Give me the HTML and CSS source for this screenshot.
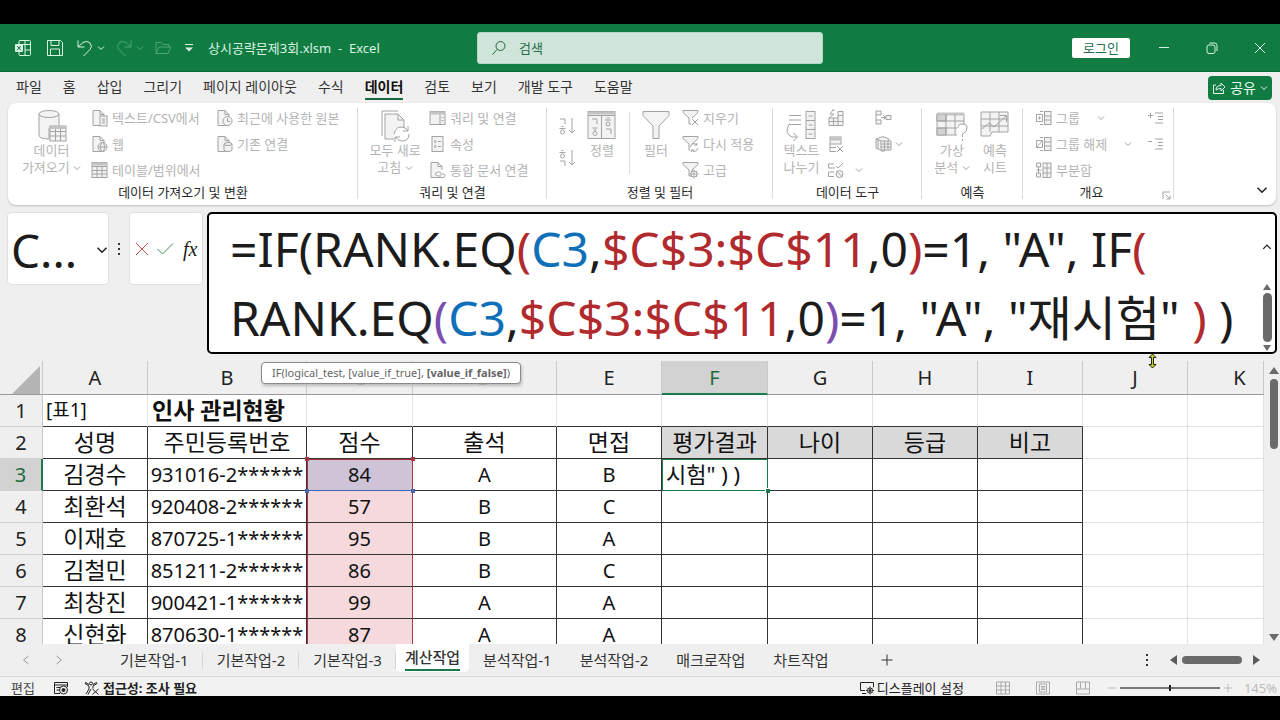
FILE: index.html
```html
<!DOCTYPE html>
<html lang="ko">
<head>
<meta charset="utf-8">
<title>상시공략문제3회.xlsm - Excel</title>
<link rel="stylesheet" href="styles.css">
</head>
<body>
<svg class="defs" aria-hidden="true">
  <symbol id="chev" viewBox="0 0 8 8"><path d="M1 2.500l3 3 3-3"/></symbol>
  <symbol id="doc" viewBox="0 0 18 18"><path class="f" d="M2 1.500h7l4 4v11H2z"/><path d="M9 1.500v4h4"/></symbol>
</svg>
<div class="app">
<header class="titlebar">
  <div class="quick">
    <button class="logo" aria-label="Excel"><svg width="18" height="18" viewBox="0 0 18 18"><path d="M5 5V2.500Q5 1.500 6 1.500h9.500q1 0 1 1v13q0 1-1 1H6q-1 0-1-1V13M5 5.500h11.500M11 1.500v15M11 11h5.500"/><rect class="solid" x="1" y="5" width="8" height="8" rx="1"/><path class="green" d="M3.200 7l3.600 4.200M6.800 7l-3.600 4.200"/></svg></button>
    <button aria-label="저장"><svg width="18" height="18" viewBox="0 0 18 18"><path d="M1.500 1.500h13l2 2v13h-15zM5 1.500v5h8v-5M4.500 16.500V10h9v6.500"/></svg></button>
    <button class="split" aria-label="실행 취소"><svg width="18" height="18" viewBox="0 0 18 18"><path d="M2 1.500v6.500h6.500M2 8l5-4.500q4-2.500 7 .5 3 3.500 0 6.500L7.500 17"/></svg><svg width="8" height="8"><use href="#chev"/></svg></button>
    <button class="split dim" aria-label="다시 실행"><svg width="18" height="18" viewBox="0 0 18 18"><path d="M16 1.500v6.500H9.500M16 8l-5-4.500q-4-2.500-7 .5-3 3.500 0 6.500L10.500 17"/></svg><svg width="8" height="8"><use href="#chev"/></svg></button>
    <button class="dim" aria-label="열기"><svg width="18" height="18" viewBox="0 0 18 18"><path d="M2 14.500v-11h5l2 2h5.500v2.500M2 14.500L5 8h12l-3 6.500z"/></svg></button>
    <button class="custom" aria-label="빠른 실행 도구 모음 사용자 지정"><svg width="10" height="10" viewBox="0 0 10 10"><path d="M1 1.500h8"/><path class="solid" d="M1 4.500h8L5 8.500z"/></svg></button>
    <span class="title">상시공략문제3회.xlsm&nbsp; -&nbsp; Excel</span>
  </div>
  <label class="search"><svg width="16" height="16" viewBox="0 0 16 16"><circle cx="9.500" cy="6" r="4.500"/><path d="M6.300 9.300L1.500 14.500"/></svg><input type="text" placeholder="검색" aria-label="검색"></label>
  <div class="window">
    <button class="login">로그인</button>
    <button aria-label="최소화"><svg width="12" height="12" viewBox="0 0 12 12"><path d="M1 5.500h10"/></svg></button>
    <button aria-label="이전 크기로"><svg width="12" height="12" viewBox="0 0 12 12"><rect x="1" y="3" width="8" height="8.500" rx="2"/><path d="M3.500 1h5q2.500 0 2.500 2.500V9"/></svg></button>
    <button aria-label="닫기"><svg width="12" height="12" viewBox="0 0 12 12"><path d="M1 1l10 10M11 1L1 11"/></svg></button>
  </div>
</header>

<nav class="menu">
  <a href="#">파일</a><a href="#">홈</a><a href="#">삽입</a><a href="#">그리기</a><a href="#">페이지 레이아웃</a><a href="#">수식</a><a href="#" class="on">데이터</a><a href="#">검토</a><a href="#">보기</a><a href="#">개발 도구</a><a href="#">도움말</a>
  <button class="share"><svg width="14" height="14" viewBox="0 0 14 14"><path d="M4 4H1.500v8.500h10V9M4 9q0-4.500 5-4.500V2l4 4-4 4V7.500Q6 7.500 4 9z"/></svg>공유<svg width="8" height="8"><use href="#chev"/></svg></button>
</nav>

<section class="ribbon">
  <div class="group g-get">
    <div class="tools">
      <button class="big"><svg width="32" height="34" viewBox="0 0 32 34"><path class="f" d="M3 5v21q0 4 10 4V19h10V5z"/><ellipse class="f" cx="13" cy="5" rx="10" ry="3.500"/><rect class="f" x="14" y="17" width="16" height="15"/><path class="k" d="M14 18.500h16"/><path d="M14 22.500h16M14 27h16M19.500 20v12M24.500 20v12"/></svg><span>데이터<br>가져오기 <svg width="8" height="8"><use href="#chev"/></svg></span></button>
      <div class="col">
        <button><svg width="18" height="18" viewBox="0 0 18 18"><use href="#doc"/><rect class="f" x="9" y="7" width="7" height="10"/><path d="M11 10h3M11 12h3M11 14h3"/></svg>텍스트/CSV에서</button>
        <button><svg width="18" height="18" viewBox="0 0 18 18"><use href="#doc"/><circle class="f" cx="11.500" cy="12" r="4.500"/><ellipse cx="11.500" cy="12" rx="2" ry="4.500"/><path d="M7 12h9"/></svg>웹</button>
        <button><svg width="18" height="18" viewBox="0 0 18 18"><rect class="f" x="1" y="1.500" width="15" height="15"/><path class="k" d="M1 3h15"/><path d="M1 5.500h15M1 9.500h15M1 13h15M6 5.500v11M11 5.500v11"/></svg>테이블/범위에서</button>
      </div>
      <div class="col">
        <button><svg width="18" height="18" viewBox="0 0 18 18"><use href="#doc"/><circle class="f" cx="11.500" cy="12" r="4.500"/><path d="M11.500 9v3.500H14"/></svg>최근에 사용한 원본</button>
        <button><svg width="18" height="18" viewBox="0 0 18 18"><use href="#doc"/><path class="f" d="M8 9v6q0 1.500 4 1.500t4-1.500V9z"/><ellipse class="f" cx="12" cy="9" rx="4" ry="1.500"/></svg>기존 연결</button>
      </div>
    </div>
    <h2>데이터 가져오기 및 변환</h2>
  </div>
  <div class="group g-query">
    <div class="tools">
      <button class="big"><svg width="32" height="34" viewBox="0 0 32 34"><path d="M3 27V2h16"/><path class="f" d="M6 5h13l6 6v8l-9 3v8H6z"/><path d="M19 5v6h6"/><path class="w" d="M15 19h15v13H15z"/><path d="M15.500 25q0-7 7-7 4 0 6.500 4M29 17v5h-5M30 25q0 7-7 7-4 0-6.500-4M16 33v-5h5"/></svg><span>모두 새로<br>고침 <svg width="8" height="8"><use href="#chev"/></svg></span></button>
      <div class="col">
        <button><svg width="18" height="18" viewBox="0 0 18 18"><rect class="f" x="1" y="2.500" width="15" height="13"/><path class="k" d="M1 4h15"/><path d="M11 5.500v10M12.500 8.500h2M12.500 11.500h2"/></svg>쿼리 및 연결</button>
        <button><svg width="18" height="18" viewBox="0 0 18 18"><rect class="f" x="3" y="1.500" width="11" height="15"/><path class="k" d="M5 6.500h2.500M5 11.500h2.500"/><path d="M9 6.500h3M9 11.500h3"/></svg>속성</button>
        <button><svg width="18" height="18" viewBox="0 0 18 18"><use href="#doc"/><path class="w" d="M7 9h9v7H7z"/><path d="M12 15H9q-2.500 0-2.500-2T9 11h3M11 13h3q2 0 2 1.500T14 16.500h-3"/></svg>통합 문서 연결</button>
      </div>
    </div>
    <h2>쿼리 및 연결</h2>
  </div>
  <div class="group g-sort">
    <div class="tools">
      <div class="pair">
        <button aria-label="오름차순"><svg width="18" height="20" viewBox="0 0 18 20"><path d="M2 2h5v5M1.500 11.500h6M3.500 9.500h2M14 1v15M11 13l3 3 3-3"/><circle cx="4.500" cy="15" r="2"/></svg></button>
        <button aria-label="내림차순"><svg width="18" height="20" viewBox="0 0 18 20"><path d="M1.500 3.500h6M3.500 1.500h2M2 12h5v5M14 1v15M11 13l3 3 3-3"/><circle cx="4.500" cy="7" r="2"/></svg></button>
      </div>
      <button class="big"><svg width="32" height="34" viewBox="0 0 32 34"><rect class="f" x="2" y="2.500" width="27" height="27"/><path class="k" d="M2 4h27"/><path d="M2 6.500h27M15.500 6.500v23M6 10h5v5M6.500 19h5M7.500 21h3M19 11h6M20.500 9h3M20 20h5v5"/><circle cx="9" cy="24.500" r="2"/><circle cx="22" cy="15" r="2"/></svg><span>정렬</span></button>
      <i class="rule"></i>
      <button class="big"><svg width="32" height="34" viewBox="0 0 32 34"><path class="f" d="M3 2.500h26v4L19 17v12.500h-6V17L3 6.500z"/></svg><span>필터</span></button>
      <div class="col">
        <button><svg width="18" height="18" viewBox="0 0 18 18"><path class="f" d="M1 1.500h15v2L10 9v6H7V9L1 3.500z"/><path class="w" d="M9 9h8v8H9z"/><path d="M10 10l6 6M16 10l-6 6"/></svg>지우기</button>
        <button><svg width="18" height="18" viewBox="0 0 18 18"><path class="f" d="M1 1.500h15v2L10 9v6H7V9L1 3.500z"/><path class="w" d="M8 9h9v8H8z"/><path d="M8 12q1-3.500 4.500-3.500L15 10V8M16 13q-1 3.500-4 3.500L9.500 15v2M15 10h-3M9.500 15h3"/></svg>다시 적용</button>
        <button><svg width="18" height="18" viewBox="0 0 18 18"><path class="f" d="M1 1.500h15v2L10 9v6H7V9L1 3.500z"/><circle class="f" cx="12" cy="13" r="3"/><circle cx="12" cy="13" r="1"/><path d="M12 8.500V10M12 16v1.500M7.500 13H9M15 13h1.500M9 10l1 1M15 10l-1 1M9 16l1-1M15 16l-1-1"/></svg>고급</button>
      </div>
    </div>
    <h2>정렬 및 필터</h2>
  </div>
  <div class="group g-tools">
    <div class="tools">
      <button class="big"><svg width="32" height="34" viewBox="0 0 32 34"><path d="M4 6.500h12M4 11h12M4 15.500h12M4 15.500q-5 9 3 12.500h5M8.500 24l4 4-4 4"/><rect class="f" x="21" y="2.500" width="9" height="27"/><path d="M21 11.500h9M21 20.500h9M23.500 7h4M23.500 16h4M23.500 25h4"/></svg><span>텍스트<br>나누기</span></button>
      <div class="col">
        <button aria-label="빠른 채우기"><svg width="18" height="18" viewBox="0 0 18 18"><path class="f" d="M2 9h9V2.500h5v14H2z"/><path d="M2 12.500h14M6.500 9v7.500M11 9v7.500M11 6.500h5M6 1L3 5h4L2 9M8 1h-3"/></svg></button>
        <button aria-label="중복된 항목 제거"><svg width="18" height="18" viewBox="0 0 18 18"><rect class="f" x="3" y="2" width="11" height="7"/><path class="k" d="M3 4h11"/><path d="M3 9v7.500h6M3 12.500h6M10 11l6 6M16 11l-6 6"/></svg></button>
        <button aria-label="데이터 유효성 검사"><svg width="18" height="18" viewBox="0 0 18 18"><path d="M7 3H1.500v4H8M7 11H1.500v4.500H7M9 5l2 2 5-5"/><circle class="f" cx="12.500" cy="13" r="3.500"/><path d="M10 10.500l5 5"/></svg><svg class="far" width="8" height="8"><use href="#chev"/></svg></button>
      </div>
      <div class="col">
        <button aria-label="통합"><svg width="18" height="18" viewBox="0 0 18 18"><path class="f" d="M2 2h5v4H2zM2 11h5v4H2zM12 6.500h5v4h-5z"/><path d="M2 6v5M7 8.500h5M9.500 6.500l2 2-2 2"/></svg></button>
        <button aria-label="데이터 모델"><svg width="18" height="18" viewBox="0 0 18 18"><path class="f" d="M2 4l7-2.500 6 2.500v9l-6 3.500-7-3.500z"/><path class="f" d="M7 6h10v9H7z"/><path d="M2 4l5 2M7 9h10M7 12h10M10.500 6v9M14 6v9M4 5v9"/></svg><svg width="8" height="8"><use href="#chev"/></svg></button>
      </div>
    </div>
    <h2>데이터 도구</h2>
  </div>
  <div class="group g-fore">
    <div class="tools">
      <button class="big"><svg width="32" height="34" viewBox="0 0 32 34"><rect class="f" x="1" y="5" width="27" height="21"/><path class="d" d="M1 5h9v7H1zM1 19h9v7H1z"/><path class="k" d="M1 5h27"/><path d="M1 12h27M1 19h27M10 5v21M19 5v21"/><path class="w" d="M21 16h11v17H21z"/><path d="M22 19q0-4 4.500-4t4.500 4-4.500 6v3M26.500 30v2"/></svg><span>가상<br>분석 <svg width="8" height="8"><use href="#chev"/></svg></span></button>
      <button class="big"><svg width="32" height="34" viewBox="0 0 32 34"><path class="f" d="M2 3h27v20H13l-2 4H2z"/><path d="M2 10h27M2 17h27M11 3v20M20 3v20M3 20l7-6 5 4L27 7M21 6.500h6.500V13"/></svg><span>예측<br>시트</span></button>
    </div>
    <h2>예측</h2>
  </div>
  <div class="group g-out">
    <div class="tools">
      <div class="col">
        <button><svg width="18" height="18" viewBox="0 0 18 18"><rect class="f" x="9.500" y="2.500" width="6.500" height="13"/><path d="M9.500 7h6.500M9.500 11h6.500M8 2.500H5M8 15.500H5M1.500 5.500h6v7h-6zM3 9h3M4.500 7.500v3"/></svg>그룹<svg class="gap" width="8" height="8"><use href="#chev"/></svg></button>
        <button><svg width="18" height="18" viewBox="0 0 18 18"><rect class="f" x="9.500" y="2.500" width="6.500" height="13"/><path d="M9.500 7h6.500M9.500 11h6.500M8 2.500H5M8 15.500H5M1.500 5.500h6v7h-6zM2 12l5-6"/></svg>그룹 해제<svg class="gap" width="8" height="8"><use href="#chev"/></svg></button>
        <button><svg width="18" height="18" viewBox="0 0 18 18"><path class="f" d="M8 2h8v14.500H8zM1.500 2h4v4h-4zM1.500 12h4v4h-4z"/><path d="M8 7h8M8 12h8M12 2v14.500M1.500 9h5M3.500 6v6"/></svg>부분합</button>
      </div>
      <div class="col">
        <button aria-label="하위 수준 표시"><svg width="18" height="18" viewBox="0 0 18 18"><path d="M1 6.500h5M3.500 4v5M8 4h8M11 7.500h5M11 10.500h5M8 14h8"/></svg></button>
        <button aria-label="하위 수준 숨기기"><svg width="18" height="18" viewBox="0 0 18 18"><path d="M1 6.500h4M8 4h8M11 7.500h5M11 10.500h5M8 14h8"/></svg></button>
      </div>
    </div>
    <h2>개요</h2>
    <button class="launch" aria-label="개요 설정"><svg width="9" height="9" viewBox="0 0 9 9"><path d="M1 8V1h7M3.500 3.500L8 8M8 4.500V8H4.500"/></svg></button>
  </div>
  <button class="collapse" aria-label="리본 축소"><svg width="12" height="12" viewBox="0 0 8 8"><use href="#chev"/></svg></button>
</section>

<section class="formula">
  <button class="name">C...<svg width="12" height="12" viewBox="0 0 8 8"><use href="#chev"/></svg></button>
  <svg class="dots" width="4" height="14" viewBox="0 0 4 14"><path d="M1 1h2v2H1zM1 6h2v2H1zM1 11h2v2H1z"/></svg>
  <div class="marks">
    <button aria-label="취소"><svg class="red" width="16" height="16" viewBox="0 0 16 16"><path d="M2 2l12 12M14 2L2 14"/></svg></button>
    <button aria-label="입력"><svg class="grn" width="18" height="16" viewBox="0 0 18 16"><path d="M1.500 8l5 5L17 2.500"/></svg></button>
    <button class="fx" aria-label="함수 삽입">fx</button>
  </div>
  <div class="edit">
    <div class="text" role="textbox" contenteditable="true" spellcheck="false" aria-label="수식 입력줄">=IF(RANK.EQ<b class="r">(</b><b class="b">C3</b>,<b class="r">$C$3:$C$11</b>,0<b class="r">)</b>=1, "A", IF<b class="r">(</b><br>RANK.EQ<b class="p">(</b><b class="b">C3</b>,<b class="r">$C$3:$C$11</b>,0<b class="p">)</b>=1, "A", "재시험" <b class="r">)</b> )</div>
    <div class="editbar">
      <svg width="10" height="10" viewBox="0 0 8 8"><path d="M1 5.500l3-3 3 3"/></svg>
      <div class="scroll"><i class="tri up"></i><i class="thumb"></i><i class="tri down"></i></div>
    </div>
  </div>
  <div class="tip">IF(logical_test, [value_if_true], <strong>[value_if_false]</strong>)</div>
  <svg class="cursor" width="9" height="16" viewBox="0 0 9 16"><path d="M4.500 1L8 4.500H5.500v7H8L4.500 15 1 11.500h2.500v-7H1z"/></svg>
</section>

<main class="sheet">
  <div class="grid">
  <table>
    <colgroup><col class="w0"><col class="w1"><col class="w2"><col class="w4"><col class="w3"><col class="w1"><col class="w4"><col class="w1"><col class="w1"><col class="w1"><col class="w1"><col></colgroup>
    <thead><tr><th class="corner"><svg width="28" height="28" viewBox="0 0 28 28"><path d="M28 0v28H0z"/></svg></th><th>A</th><th>B</th><th>C</th><th>D</th><th>E</th><th class="sel">F</th><th>G</th><th>H</th><th>I</th><th>J</th><th class="last">K</th></tr></thead>
    <tbody>
      <tr class="first"><th>1</th><td class="left s">[표1]</td><td class="left bold">인사 관리현황</td><td></td><td></td><td></td><td></td><td></td><td></td><td></td><td></td><td></td></tr>
      <tr class="box"><th>2</th><td>성명</td><td>주민등록번호</td><td>점수</td><td>출석</td><td>면접</td><td class="gray">평가결과</td><td class="gray">나이</td><td class="gray">등급</td><td class="gray">비고</td><td></td><td></td></tr>
      <tr class="box"><th class="sel">3</th><td>김경수</td><td class="s">931016-2******</td><td class="ref cur s">84<i class="h tl"></i><i class="h tr"></i><i class="h bl"></i><i class="h br"></i></td><td class="s">A</td><td class="s">B</td><td class="active">시험" ) )<i class="h fill"></i></td><td></td><td></td><td></td><td></td><td></td></tr>
      <tr class="box"><th>4</th><td>최환석</td><td class="s">920408-2******</td><td class="ref s">57</td><td class="s">B</td><td class="s">C</td><td></td><td></td><td></td><td></td><td></td><td></td></tr>
      <tr class="box"><th>5</th><td>이재호</td><td class="s">870725-1******</td><td class="ref s">95</td><td class="s">B</td><td class="s">A</td><td></td><td></td><td></td><td></td><td></td><td></td></tr>
      <tr class="box"><th>6</th><td>김철민</td><td class="s">851211-2******</td><td class="ref s">86</td><td class="s">B</td><td class="s">C</td><td></td><td></td><td></td><td></td><td></td><td></td></tr>
      <tr class="box"><th>7</th><td>최창진</td><td class="s">900421-1******</td><td class="ref s">99</td><td class="s">A</td><td class="s">A</td><td></td><td></td><td></td><td></td><td></td><td></td></tr>
      <tr class="box"><th>8</th><td>신현화</td><td class="s">870630-1******</td><td class="ref s">87</td><td class="s">A</td><td class="s">A</td><td></td><td></td><td></td><td></td><td></td><td></td></tr>
    </tbody>
  </table>
  </div>
  <div class="scroll vbar"><i class="tri up"></i><i class="thumb"></i><i class="space"></i><i class="tri down"></i></div>
</main>

<nav class="sheets">
  <div class="arrows"><button aria-label="이전 시트"><svg width="8" height="12" viewBox="0 0 8 12"><path d="M6.500 2l-5 4 5 4"/></svg></button><button aria-label="다음 시트"><svg width="8" height="12" viewBox="0 0 8 12"><path d="M1.500 2l5 4-5 4"/></svg></button></div>
  <button class="tab">기본작업-1</button><button class="tab">기본작업-2</button><button class="tab">기본작업-3</button><button class="tab on"><span>계산작업</span></button><button class="tab">분석작업-1</button><button class="tab">분석작업-2</button><button class="tab">매크로작업</button><button class="tab">차트작업</button>
  <button class="add" aria-label="새 시트"><svg width="12" height="12" viewBox="0 0 12 12"><path d="M6 .5v11M.5 6h11"/></svg></button>
  <div class="hbar"><svg class="dots" width="4" height="14" viewBox="0 0 4 14"><path d="M1 1h2v2H1zM1 6h2v2H1zM1 11h2v2H1z"/></svg><i class="tri lt"></i><i class="thumb"></i><i class="tri rt"></i></div>
</nav>

<footer class="status">
  <span>편집</span>
  <button aria-label="매크로 기록"><svg width="16" height="14" viewBox="0 0 16 14"><path d="M7 12.500H1.500v-11h13V6M1.500 4h13M3.500 6.500h4M3.500 9h3"/><circle cx="10.500" cy="9" r="4"/><circle class="dot" cx="10.500" cy="9" r="1.500"/></svg></button>
  <button class="acc"><svg width="16" height="14" viewBox="0 0 16 14"><circle cx="7" cy="2.500" r="1.500"/><path d="M1 2.500l4 2.500v3l-3 5M13 2.500L9 5v2.500M1 2.500l.5-1L5 3.500M13 2.500l-.5-1L9 3.500M7 8l-3 5.500M8.500 8l6 5.500M14.500 8l-6 5.500"/></svg>접근성: 조사 필요</button>
  <div class="right">
    <button class="disp"><svg width="16" height="14" viewBox="0 0 16 14"><path d="M6 9.500H1.500v-8h13V6M3 12.500h4"/><circle cx="11" cy="9.500" r="2.500"/><circle class="dot" cx="11" cy="9.500" r="1"/><path d="M11 5.500V7M11 12v1.500M7 9.500h1.500M13.500 9.500H15M8.200 6.700l1 1M13.800 6.700l-1 1M8.200 12.300l1-1M13.800 12.300l-1-1"/></svg>디스플레이 설정</button>
    <button class="view" aria-label="기본"><svg width="14" height="14" viewBox="0 0 14 14"><path d="M.5 1h13v12H.5zM.5 5h13M.5 9h13M5 1v12M9.500 1v12"/></svg></button>
    <button class="view" aria-label="페이지 레이아웃"><svg width="14" height="14" viewBox="0 0 14 14"><path d="M.5 1h13v12H.5zM3.500 3h7v8h-7zM5 5.500h4M5 7h4M5 8.500h4"/></svg></button>
    <button class="view" aria-label="페이지 나누기"><svg width="14" height="14" viewBox="0 0 14 14"><path d="M.5 1h13v12H.5zM4.500 1v7h5V1M.5 8h4M9.500 8h4"/></svg></button>
    <div class="zoom"><svg width="8" height="8" viewBox="0 0 8 8"><path d="M0 4h8"/></svg><input type="range" min="10" max="400" value="205" aria-label="확대/축소"><svg width="8" height="8" viewBox="0 0 8 8"><path d="M0 4h8M4 0v8"/></svg></div>
    <span class="pct">145%</span>
  </div>
</footer>
</div>
</body>
</html>
```
FILE: styles.css
```css
* { box-sizing: border-box; }
body {
  margin: 0; height: 100vh; padding: 24px 0; overflow: hidden;
  background: #000; color: #222;
  font: 13px/16px "Noto Sans", "Noto Sans CJK KR", sans-serif;
}
.app { height: 100%; display: flex; flex-direction: column; background: #efefef; }
button { border: 0; padding: 0; background: none; font: inherit; color: inherit; display: flex; align-items: center; }
svg { fill: none; stroke: currentColor; flex: none; overflow: visible; }
i { display: block; }
.defs { position: absolute; width: 0; height: 0; }

.titlebar { flex: none; height: 48px; background: #107c41; color: #d9f3e3; display: grid; grid-template-columns: 477fr 346px 457fr; align-items: center; border-bottom: 1px solid #0b6b37; }
.quick { display: flex; align-items: center; gap: 12px; padding-left: 14px; }
.logo { margin-right: 2px; }
.split { gap: 3px; }
.split svg + svg { margin-right: -2px; }
.dim { color: #4fa575; }
.solid { fill: currentColor; stroke: none; }
.green { stroke: #107c41; }
.title { white-space: nowrap; margin-left: 2px; padding-top: 1px; }
.search { height: 32px; background: #cfe5d9; border: 1px solid #b4d6c4; border-radius: 3px; display: flex; align-items: center; gap: 12px; padding: 0 13px; color: #1d6a3f; }
.search input { flex: 1; min-width: 0; border: 0; background: none; font: inherit; padding: 0; outline: 0; }
.search input::placeholder { color: #2b6a49; opacity: 1; }
.window { display: flex; align-items: center; justify-content: flex-end; gap: 36px; padding-right: 14px; }
.login { height: 20px; width: 58px; margin-right: -8px; justify-content: center; background: #fff; border-radius: 2px; color: #24704a; }

.menu { flex: none; height: 31px; display: flex; align-items: center; gap: 21px; padding: 0 8px 0 16px; font-size: 14px; }
.menu a { color: #333; text-decoration: none; line-height: 20px; padding-bottom: 1px; border-bottom: 2px solid transparent; margin-top: 2px; white-space: nowrap; }
.menu a.on { font-weight: 700; color: #111; border-color: #17683d; }
.share { margin-left: auto; height: 24px; padding: 0 4px; gap: 4px; border-radius: 4px; background: #107c41; color: #e4f7ec; }

.ribbon { flex: none; margin: 0 4px 0 8px; height: 102px; background: #fff; border-radius: 8px; display: flex; color: #b4b4b4; position: relative; box-shadow: 0 1px 2px #bbb; }
.ribbon svg { stroke: #a3a3a3; }
.f { fill: #f3f3f3; } .w { fill: #fff; stroke: none; } .k { stroke-width: 3; stroke: #c4c4c4; } .d { fill: #d2d2d2; }
.group { position: relative; display: flex; flex-direction: column; padding: 2px 0; }
.group::after { content: ""; position: absolute; right: 0; top: 5px; bottom: 6px; width: 1px; background: #dcdcdc; }
.tools { display: flex; height: 78px; }
.group h2 { margin: 0; font: inherit; line-height: 18px; color: #2b2b2b; text-align: center; }
.big { flex-direction: column; padding-top: 4px; line-height: 17px; white-space: nowrap; text-align: center; }
.big > span { margin-top: -1px; }
.col { display: flex; flex-direction: column; }
.col button { height: 26px; gap: 3px; white-space: nowrap; }
.g-get { width: 350px; }
.g-get .tools { padding-left: 14px; }
.g-get .big { width: 59px; margin-right: 10px; }
.g-get .col { width: 125px; flex: none; }
.g-query { width: 189px; }
.g-query .tools { padding-left: 10px; }
.g-query .big { width: 54px; margin-right: 7px; }
.g-sort { width: 226px; }
.g-sort .tools { padding-left: 11px; }
.pair { display: flex; flex-direction: column; gap: 12px; padding-top: 12px; width: 20px; }
.g-sort .big { width: 32px; margin-left: 8px; }
.rule { width: 1px; height: 62px; margin: 7px 2px 0 11px; background: #dcdcdc; }
.g-sort .col { margin-left: 10px; }
.g-tools { width: 149px; }
.g-tools .tools { padding-left: 10px; }
.g-tools .big { width: 38px; margin-right: 7px; }
.g-tools .col { width: 49px; }
.col .far { margin-left: 7px; }
.g-fore { width: 101px; }
.g-fore .tools { padding-left: 11px; gap: 5px; }
.g-fore .big { width: 38px; }
.g-out { width: 151px; }
.g-out .tools { padding-left: 12px; justify-content: space-between; padding-right: 9px; }
.g-out h2 { padding-right: 14px; }
.col .gap { margin-left: 14px; }
.launch { position: absolute; right: 3px; bottom: 5px; }
.collapse { margin: auto 8px 9px auto; }
.ribbon .collapse svg { stroke: #222; }

.formula { flex: none; height: 156px; display: flex; align-items: flex-start; padding: 7px 3px 0 7px; position: relative; color: #1c1c1c; }
.name { width: 102px; height: 73px; background: #fff; border: 1px solid #e0e0e0; border-radius: 4px; justify-content: space-between; padding: 2px 0 0 3px; font-size: 46px; line-height: 60px; }
.dots { fill: #333; stroke: none; }
.formula .dots { margin: 30px 8px 0; }
.marks { height: 73px; width: 74px; background: #fff; border: 1px solid #e0e0e0; border-radius: 4px; display: flex; align-items: center; gap: 6px; padding-left: 4px; }
.red { color: #c4504f; } .grn { color: #3f8f58; }
.fx { font: italic 20px/20px "Liberation Serif", serif; color: #222; margin-left: 3px; }
.edit { flex: 1; min-width: 0; height: 142px; margin-left: 4px; border: 2px solid #000; border-radius: 5px; background: #fff; display: flex; }
.text { flex: 1; min-width: 0; padding: 0 0 0 21px; font-size: 48px; line-height: 69px; white-space: nowrap; outline: 0; }
.text b { font-weight: 400; }
.r { color: #b02a2e; } .b { color: #0f6fb8; } .p { color: #7b4fb0; }
.editbar { width: 16px; display: flex; flex-direction: column; align-items: center; padding: 28px 0 1px; }
.scroll { display: flex; flex-direction: column; align-items: center; gap: 3px; }
.editbar .scroll { margin-top: auto; }
.thumb { background: #6a6a6a; border-radius: 5px; }
.editbar .thumb { width: 9px; height: 49px; }
.tri { border: 4px solid transparent; }
.tri.up { border-top: 0; border-bottom: 6px solid #6a6a6a; }
.tri.down { border-bottom: 0; border-top: 6px solid #6a6a6a; }
.tri.lt { border-left: 0; border-right: 7px solid #5c5c5c; }
.tri.rt { border-right: 0; border-left: 7px solid #5c5c5c; }
.tip { position: absolute; left: 261px; top: 157px; height: 22px; width: 260px; text-align: center; border: 1px solid #8a8a8a; border-radius: 4px; background: #fff; font-size: 11px; line-height: 19px; color: #666; white-space: nowrap; z-index: 2; box-shadow: 1px 2px 3px #bbb; }
.cursor { position: absolute; left: 1148px; top: 148px; z-index: 2; fill: #c9d419; stroke: #222; }

.sheet { flex: 1; min-height: 0; display: flex; }
.grid { flex: 1; min-width: 0; overflow: hidden; background: #fff; }
table { table-layout: fixed; width: 100%; border-collapse: separate; border-spacing: 0; font-size: 23px; line-height: 31px; color: #111; }
.w0 { width: 43px; } .w1 { width: 105px; } .w2 { width: 159px; } .w3 { width: 144px; } .w4 { width: 106px; }
th { font-weight: 400; padding: 0; background: #efefef; font-size: 20px; border-right: 1px solid #c9c9c9; border-bottom: 1px solid #d0d0d0; color: #222; }
thead th { height: 34px; border-bottom-color: #999; }
thead th.sel { background: #d2d2d2; color: #1d6b41; border-bottom: 2px solid #1d7a4a; }
thead th.last { padding-left: 28px; }
tbody th.sel { background: #d2d2d2; color: #1d6b41; border-right: 2px solid #1d7a4a; }
.corner svg { display: block; margin: 4px 0 0 12px; fill: #b4b4b4; stroke: none; }
td { height: 32px; padding: 0; text-align: center; border-right: 1px solid #e2e2e2; border-bottom: 1px solid #e2e2e2; white-space: nowrap; }
td.s { font-size: 20px; }
td.left { text-align: left; padding-left: 4px; }
td.s.left { font-size: 19px; padding-left: 3px; }
td.bold { font-weight: 700; }
.first td:nth-child(-n+10) { border-bottom-color: #333; }
.box td:nth-child(-n+10) { border-right-color: #333; border-bottom-color: #333; }
.gray { background: #d9d9d9; }
.box td.ref { background: #f5d9dc; border-right-color: #a8373f; box-shadow: inset 1px 0 #a8373f; }
.box td.cur { position: relative; background: #cfc4d7; border-bottom-color: #4467b0; box-shadow: inset 1px 0 #a8373f, inset 0 1px #a8373f; }
.box td.active { position: relative; text-align: left; padding-left: 4px; font-size: 22px; border-right-color: #1d7a4a; border-bottom-color: #1d7a4a; box-shadow: inset 1px 1px #1d7a4a; }
.h { position: absolute; width: 4px; height: 4px; }
.tl, .tr { top: -2px; background: #a8373f; } .bl, .br { bottom: -3px; background: #4467b0; }
.tl, .bl { left: -2px; } .tr, .br { right: -3px; }
.fill { right: -3px; bottom: -3px; background: #1d7a4a; border: 1px solid #fff; border-width: 1px 0 0 1px; width: 5px; height: 5px; }
.vbar { flex: none; width: 16px; padding: 6px 0 3px 4px; }
.vbar .tri, .hbar .tri { border-width: 5px; }
.vbar .tri.up { border-top: 0; border-bottom-width: 7px; } .vbar .tri.down { border-bottom: 0; border-top-width: 7px; }
.vbar .thumb { width: 8px; height: 70px; margin-top: 2px; }
.space { flex: 1; }

.sheets { flex: none; height: 33px; border-bottom: 1px solid #d9d9d9; display: flex; align-items: stretch; font-size: 15px; }
.arrows { display: flex; gap: 25px; padding-left: 22px; width: 106px; color: #999; }
.tab { padding: 0 14px; position: relative; color: #333; white-space: nowrap; }
.tab:nth-of-type(-n+3)::after { content: ""; position: absolute; right: 0; top: 8px; height: 17px; width: 1px; background: #d5d5d5; }
.tab.on { background: #fff; margin-bottom: 4px; padding: 0 9px; border-radius: 0 0 5px 5px; }
.tab.on span { border-bottom: 2px solid #17784a; line-height: 24px; font-weight: 500; }
.add { padding-left: 38px; color: #333; }
.hbar { margin-left: auto; display: flex; align-items: center; gap: 5px; padding-right: 20px; }
.hbar .dots { margin-right: 16px; }
.hbar .tri.lt { border-left: 0; border-right-width: 7px; } .hbar .tri.rt { border-right: 0; border-left-width: 7px; margin-left: 6px; }
.hbar .thumb { width: 60px; height: 8px; }

.status { flex: none; height: 19px; background: #f2f2f2; display: flex; align-items: center; padding: 3px 3px 0 11px; font-size: 13px; white-space: nowrap; overflow: hidden; }
.status span { color: #444; }
.status > button { margin-left: 18px; }
.status .acc { font-weight: 700; gap: 3px; margin-left: 15px; }
.dot { fill: currentColor; }
.right { margin-left: auto; display: flex; align-items: center; }
.disp { gap: 2px; margin-right: 6px; }
.view { color: #aaa; margin-left: 26px; }
.zoom { display: flex; align-items: center; gap: 4px; margin-left: 18px; color: #bbb; }
.zoom input { appearance: none; width: 100px; height: 8px; margin: 0; background: linear-gradient(#777, #777) center / 100% 2px no-repeat; }
.zoom input::-webkit-slider-thumb { appearance: none; width: 2px; height: 6px; background: #222; }
.status .pct { margin-left: 12px; color: #bbb; }
```
